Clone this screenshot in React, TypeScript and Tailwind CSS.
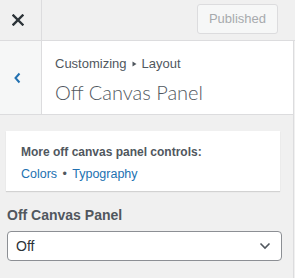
import React from "react";

export default function App() {
  return (
    <div
      className="w-[295px] h-[278px] bg-[#f0f0f0] flex flex-col text-[#3c434a] overflow-hidden"
      style={{ fontFamily: '"Liberation Sans", Arial, sans-serif' }}
    >
      {/* Top bar */}
      <div className="h-[41px] flex border-b border-[#dcdcde] shrink-0">
        <div className="w-[42px] flex items-center justify-start pl-[12px] border-r border-[#dcdcde]">
          <svg width="12" height="12" viewBox="0 0 12 12">
            <path d="M1.5 1.5 L10.5 10.5 M10.5 1.5 L1.5 10.5" stroke="#2c3338" strokeWidth="2.4" strokeLinecap="square" />
          </svg>
        </div>
        <div className="flex-1 flex items-start justify-end pt-[4px] pr-[17px]">
          <div className="h-[30px] w-[81px] rounded-[3px] border border-[#dcdcde] bg-[#f6f7f7] text-[#a7aaad] text-[13px] flex items-center justify-center">
            Published
          </div>
        </div>
      </div>
      <div className="flex flex-1">
        <div className="w-[293px] flex flex-col">
          {/* Header */}
          <div className="h-[74px] flex bg-white border-b border-[#dcdcde] shrink-0">
            <div className="w-[42px] bg-[#f6f7f7] border-r border-[#dcdcde] flex items-center justify-start pl-[12px]">
              <svg width="10" height="14" viewBox="0 0 10 14">
                <path d="M7.5 2.5 L3.5 7 L7.5 11.5" stroke="#2271b1" strokeWidth="2" fill="none" />
              </svg>
            </div>
            <div className="flex-1 pl-[13px] pt-[14px]">
              <div className="text-[13px] leading-[18px] text-[#50575e] flex items-center">
                Customizing
                <svg width="5" height="6" viewBox="0 0 5 6" className="mx-[5px]">
                  <path d="M0.5 0.5 L4.5 3 L0.5 5.5 Z" fill="#50575e" />
                </svg>
                Layout
              </div>
              <div className="text-[20px] leading-[26px] text-[#50575e] mt-[6px]" style={{ fontFamily: 'Lato, sans-serif', fontWeight: 300 }}>
                Off Canvas Panel
              </div>
            </div>
          </div>
          {/* Card */}
          <div className="mt-[16px] ml-[6px] w-[274px] h-[60px] bg-white shadow-[0_1px_1px_rgba(0,0,0,0.12)] pl-[15px] pt-[13px]">
            <div className="text-[12px] font-bold leading-[16px] text-[#50575e]">More off canvas panel controls:</div>
            <div className="text-[12.5px] leading-[18px] mt-[5px] text-[#2271b1]">
              Colors <span className="text-[#50575e] mx-[2px]">•</span> Typography
            </div>
          </div>
          {/* Select */}
          <div className="mt-[14px] ml-[7px] text-[14px] font-bold leading-[20px] text-[#50575e]">Off Canvas Panel</div>
          <div className="mt-[6px] ml-[7px] w-[275px] h-[30px] bg-white border border-[#8c8f94] rounded-[4px] flex items-center justify-between pl-[8px] pr-[10px]">
            <span className="text-[14px] text-[#2c3338]">Off</span>
            <svg width="12" height="8" viewBox="0 0 12 8">
              <path d="M1.5 1.5 L6 6 L10.5 1.5" stroke="#50575e" strokeWidth="1.6" fill="none" />
            </svg>
          </div>
        </div>
        <div className="w-[1px] bg-[#dcdcde]" />
      </div>
    </div>
  );
}
